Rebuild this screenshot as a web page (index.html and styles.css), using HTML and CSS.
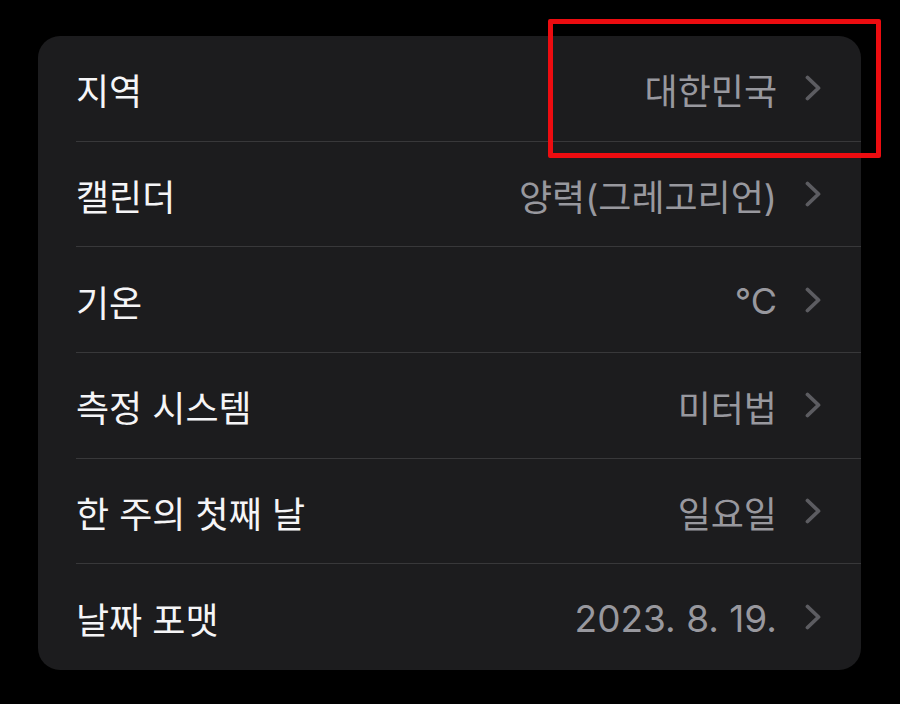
FILE: index.html
```html
<!DOCTYPE html>
<html lang="ko">
<head>
  <meta charset="UTF-8" />
  <meta name="viewport" content="width=device-width, initial-scale=1.0"/>
  <title>언어 및 지역</title>
  <link rel="stylesheet" href="styles.css">
</head>
<body>
  <div class="screen">
    <ul class="group">
      <li class="row">
        <span class="label">지역</span>
        <span class="value">대한민국</span>
        <svg class="chevron" viewBox="0 0 16 26"><path d="M2.5 2.5 L13.5 13 L2.5 23.5"/></svg>
      </li>
      <li class="row">
        <span class="label">캘린더</span>
        <span class="value">양력(그레고리언)</span>
        <svg class="chevron" viewBox="0 0 16 26"><path d="M2.5 2.5 L13.5 13 L2.5 23.5"/></svg>
      </li>
      <li class="row">
        <span class="label">기온</span>
        <span class="value">°C</span>
        <svg class="chevron" viewBox="0 0 16 26"><path d="M2.5 2.5 L13.5 13 L2.5 23.5"/></svg>
      </li>
      <li class="row">
        <span class="label">측정 시스템</span>
        <span class="value">미터법</span>
        <svg class="chevron" viewBox="0 0 16 26"><path d="M2.5 2.5 L13.5 13 L2.5 23.5"/></svg>
      </li>
      <li class="row">
        <span class="label">한 주의 첫째 날</span>
        <span class="value">일요일</span>
        <svg class="chevron" viewBox="0 0 16 26"><path d="M2.5 2.5 L13.5 13 L2.5 23.5"/></svg>
      </li>
      <li class="row">
        <span class="label">날짜 포맷</span>
        <span class="value date">2023. 8. 19.</span>
        <svg class="chevron" viewBox="0 0 16 26"><path d="M2.5 2.5 L13.5 13 L2.5 23.5"/></svg>
      </li>
    </ul>
    <div class="highlight"></div>
  </div>
</body>
</html>
```

FILE: styles.css
```css
:root {
  --bg: #000;
  --card: #1c1c1e;
  --separator: #38383a;
  --text: #f5f5f7;
  --secondary: #98989e;
  --chevron: #5c5c61;
  --mark: #ec0c10;
}

body {
  margin: 0;
  background: var(--bg);
  font-family: "Inter", "Noto Sans CJK KR", sans-serif;
}

.screen {
  position: relative;
  width: 900px;
  height: 704px;
  padding: 36px 0 0 38px;
  box-sizing: border-box;
}

.group {
  list-style: none;
  margin: 0;
  padding: 0 0 0 38px;
  width: 823px;
  box-sizing: border-box;
  background: var(--card);
  border-radius: 22px;
}

.row {
  display: flex;
  align-items: center;
  height: 105.7px;
  padding-right: 40px;
  border-bottom: 1px solid var(--separator);
  box-sizing: border-box;
}

.row:last-child {
  border-bottom: none;
}

.label {
  flex: 1;
  color: var(--text);
  font-size: 36px;
  padding-top: 2px;
}

.value {
  color: var(--secondary);
  font-size: 36px;
  padding-top: 2px;
  margin-right: -2px;
}

.value.date {
  font-size: 37px;
}

.chevron {
  width: 16px;
  height: 26px;
  margin-left: 30px;
  fill: none;
  stroke: var(--chevron);
  stroke-width: 3.8;
  stroke-linecap: round;
  stroke-linejoin: round;
}

/* 빨간 강조 박스 */
.highlight {
  position: absolute;
  left: 548px;
  top: 19px;
  width: 333px;
  height: 139px;
  border: 5px solid var(--mark);
  border-radius: 2px;
  box-sizing: border-box;
}
```
